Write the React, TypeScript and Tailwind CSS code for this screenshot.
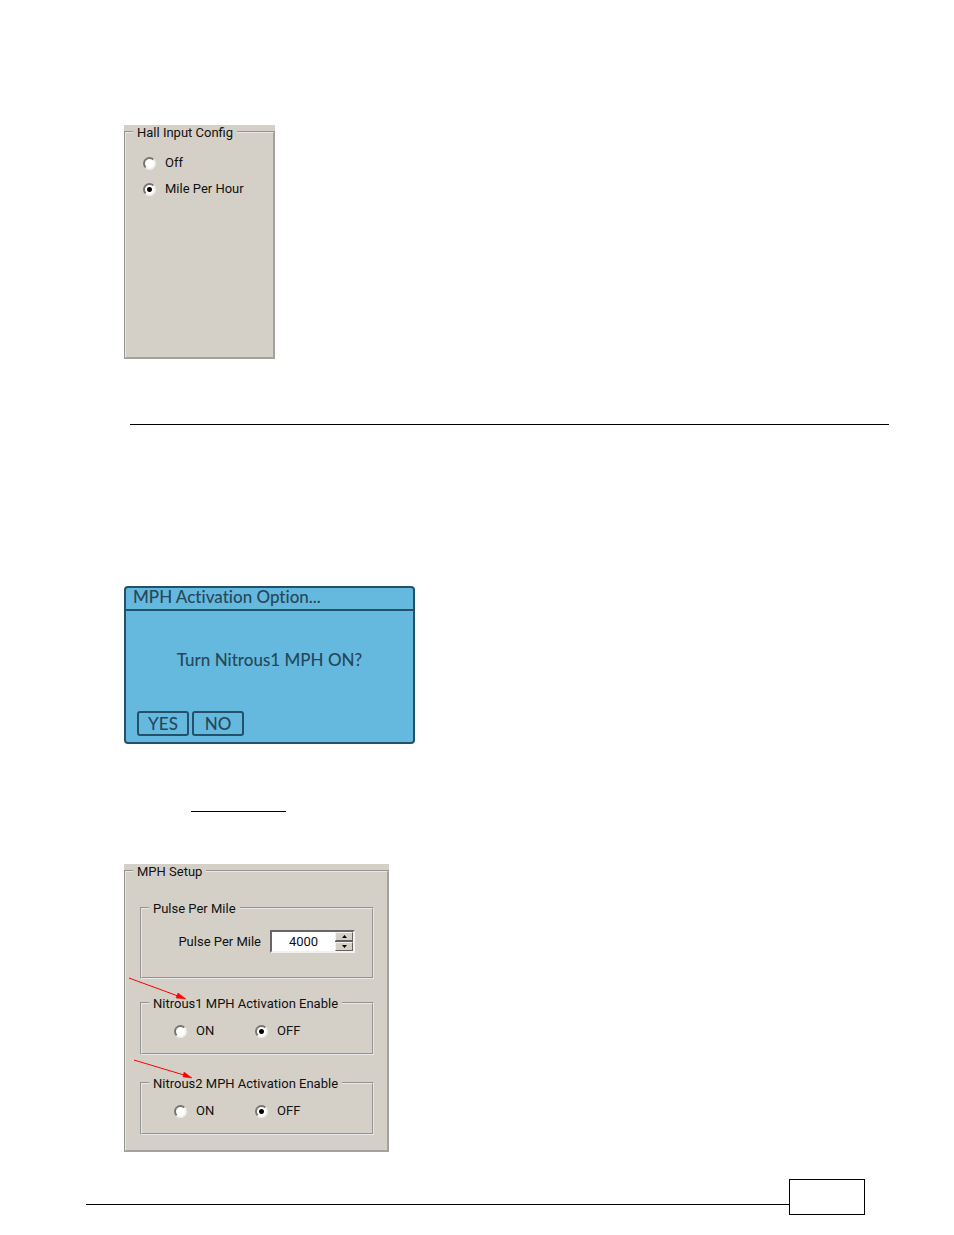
import { useState, type ReactNode } from "react";

function Group({ title, className, children }: { title: string; className: string; children: ReactNode }) {
  return (
    <fieldset className={`min-w-0 border-2 border-[#e8e8e8] ${className}`}>
      <legend className="ml-[7px] h-[14px] px-1 leading-4">{title}</legend>
      {children}
    </fieldset>
  );
}

function Radio({ name, label, checked = false }: { name: string; label: string; checked?: boolean }) {
  return (
    <label className="flex items-center gap-[9px] leading-4">
      <input
        type="radio"
        name={name}
        defaultChecked={checked}
        className="size-[13px] shrink-0 appearance-none rounded-full border-2 border-t-[#77746f] border-r-[#f1efeb] border-b-[#f1efeb] border-l-[#77746f] bg-white checked:bg-[radial-gradient(circle,#000_2px,#fff_3px)]"
      />
      {label}
    </label>
  );
}

const spin =
  "flex h-[9px] w-[18px] items-center justify-center border border-t-[#f4f2ee] border-r-[#66635f] border-b-[#66635f] border-l-[#f4f2ee] bg-[#d4d0c8]";

function PulseField() {
  const [value, setValue] = useState(4000);
  return (
    <div className="flex items-center gap-[9px]">
      <label htmlFor="pulse">Pulse Per Mile</label>
      <div className="flex items-center border-2 border-t-[#66666a] border-r-[#f4f2ee] border-b-[#f4f2ee] border-l-[#66666a] bg-white">
        <input
          id="pulse"
          type="text"
          inputMode="numeric"
          value={value}
          onChange={(e) => setValue(Number(e.target.value) || 0)}
          className="h-[19px] w-[63px] bg-white text-center outline-none"
        />
        <div className="flex flex-col gap-px bg-[#66635f]">
          <button type="button" aria-label="Increase" className={spin} onClick={() => setValue(value + 1)}>
            <svg width="5" height="3" viewBox="0 0 5 3"><path d="M2.5 0 5 3H0z" /></svg>
          </button>
          <button type="button" aria-label="Decrease" className={spin} onClick={() => setValue(value - 1)}>
            <svg width="5" height="3" viewBox="0 0 5 3"><path d="M2.5 3 0 0h5z" /></svg>
          </button>
        </div>
      </div>
    </div>
  );
}

const outer =
  "[border-style:groove_solid_solid_groove] border-r-[#a3a19c] border-b-[#a3a19c]";
const lcdButton =
  "h-[25px] w-[52px] rounded-[3px] border-2 border-[#23516a] text-center leading-5";

export default function App() {
  return (
    <main className="min-h-screen bg-white pt-[125px] pb-5 font-[Roboto,Arial,sans-serif] text-[13px] text-[#111]">
      <section className="ml-[124px] w-[151px] bg-[#d4d0c8]">
        <Group title="Hall Input Config" className={`${outer} min-h-[234px]`}>
          <div className="flex flex-col gap-[10px] pt-4 pl-[17px]">
            <Radio name="hall" label="Off" />
            <Radio name="hall" label="Mile Per Hour" checked />
          </div>
        </Group>
      </section>

      <hr className="mt-[65px] mr-[65px] ml-[130px] border-black" />

      <section className="mt-[161px] ml-[124px] w-[291px] rounded-[4px] border-2 border-[#23516a] bg-[#65b9df] font-[Lato,sans-serif] text-[17px] font-medium text-[#264859] [font-variant-ligatures:none]">
        <h2 className="border-b-2 border-[#23516a] pb-[3px] pl-[7px] leading-[18px]">MPH Activation Option...</h2>
        <p className="pt-[37px] text-center leading-6">Turn Nitrous1 MPH ON?</p>
        <div className="flex gap-[3px] pt-[39px] pb-[6px] pl-[11px]">
          <button type="button" className={lcdButton}>YES</button>
          <button type="button" className={lcdButton}>NO</button>
        </div>
      </section>

      <hr className="mt-[67px] ml-[191px] w-[95px] border-black" />

      <section className="relative mt-[52px] ml-[124px] w-[265px] bg-[#d4d0c8]">
        <Group title="MPH Setup" className={`${outer} pb-[15px]`}>
          <div className="pt-[23px] pr-[13px] pl-[14px]">
            <Group title="Pulse Per Mile" className="[border-style:groove] pb-6">
              <div className="flex justify-end pt-[15px] pr-[17px]">
                <PulseField />
              </div>
            </Group>
            <Group title="Nitrous1 MPH Activation Enable" className="mt-[17px] [border-style:groove] pb-[14px]">
              <div className="grid grid-cols-[81px_1fr] pt-[13px] pl-8">
                <Radio name="n1" label="ON" />
                <Radio name="n1" label="OFF" checked />
              </div>
            </Group>
            <Group title="Nitrous2 MPH Activation Enable" className="mt-[21px] [border-style:groove] pb-[14px]">
              <div className="grid grid-cols-[81px_1fr] pt-[13px] pl-8">
                <Radio name="n2" label="ON" />
                <Radio name="n2" label="OFF" checked />
              </div>
            </Group>
          </div>
        </Group>
        <svg
          className="pointer-events-none absolute top-0 left-0"
          width="80"
          height="230"
          viewBox="0 0 80 230"
          fill="#f00"
          stroke="#f00"
          aria-hidden="true"
        >
          <path d="M5 114 54 132M10 196 60 211" />
          <path d="M62 135 52 134 54 129zM68 214 59 213 60 208z" strokeWidth="0.5" />
        </svg>
      </section>

      <footer className="mt-[27px] mr-[89px] ml-[86px] flex">
        <div className="mt-[25px] h-px flex-1 bg-black" />
        <div className="h-9 w-[76px] border border-black" />
      </footer>
    </main>
  );
}
